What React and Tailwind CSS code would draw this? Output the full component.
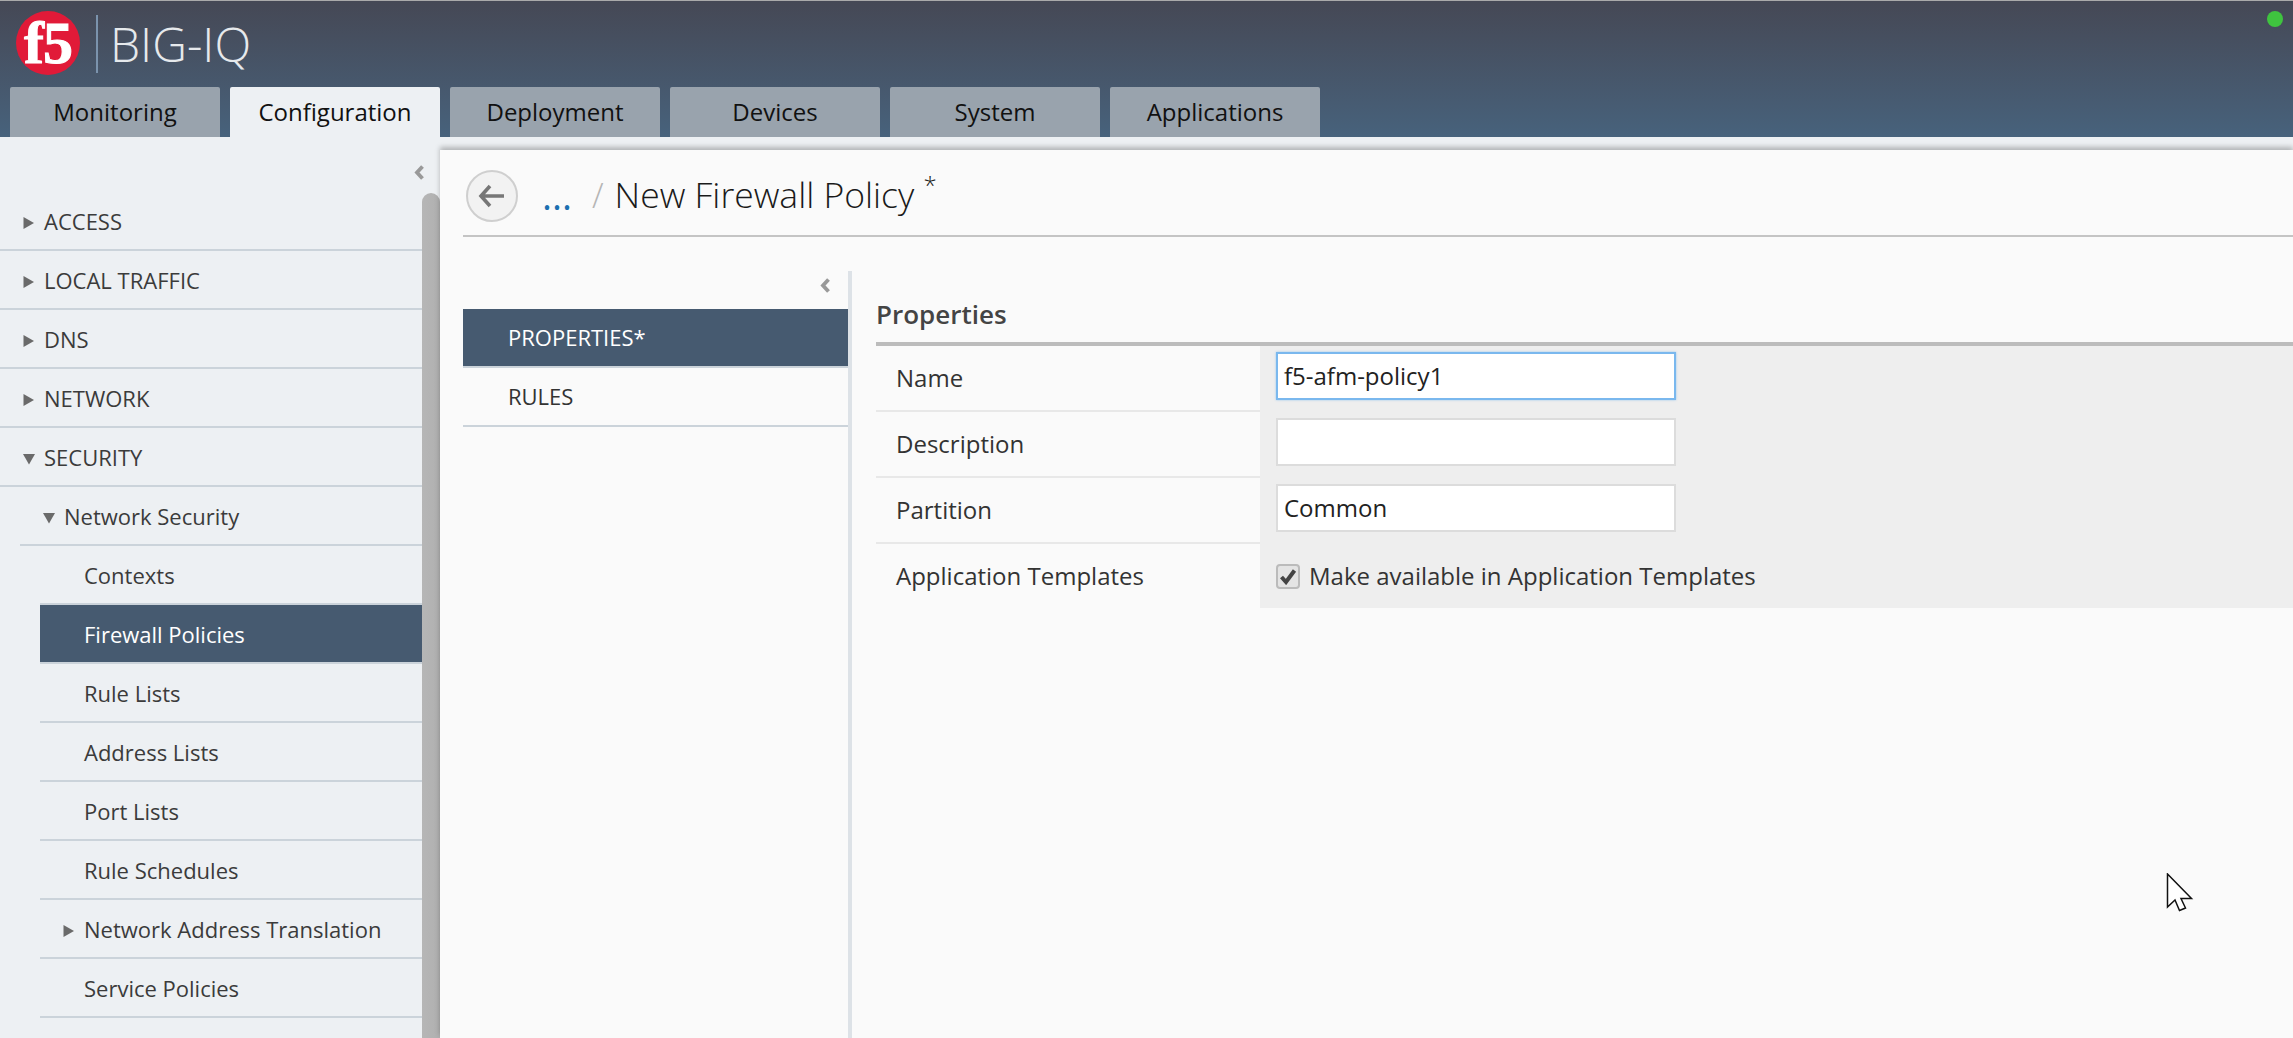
import React from "react";

const font = { fontFamily: '"Open Sans", sans-serif' };

const tabs = ["Monitoring", "Configuration", "Deployment", "Devices", "System", "Applications"];

const navItems = [
  { label: "ACCESS", indent: 0, arrow: "right" },
  { label: "LOCAL TRAFFIC", indent: 0, arrow: "right" },
  { label: "DNS", indent: 0, arrow: "right" },
  { label: "NETWORK", indent: 0, arrow: "right" },
  { label: "SECURITY", indent: 0, arrow: "down" },
  { label: "Network Security", indent: 1, arrow: "down" },
  { label: "Contexts", indent: 2 },
  { label: "Firewall Policies", indent: 2, active: true },
  { label: "Rule Lists", indent: 2 },
  { label: "Address Lists", indent: 2 },
  { label: "Port Lists", indent: 2 },
  { label: "Rule Schedules", indent: 2 },
  { label: "Network Address Translation", indent: 2, arrow: "right" },
  { label: "Service Policies", indent: 2 },
];

const Arrow = ({ dir }) => (
  <svg width="12" height="14" viewBox="0 0 12 14" className="shrink-0">
    {dir === "right" ? (
      <path d="M0.5 1 L11 7 L0.5 13 Z" fill="#6a6a6a" />
    ) : (
      <path d="M0 2 L12 2 L6 12.5 Z" fill="#6a6a6a" />
    )}
  </svg>
);

const Chevron = () => (
  <svg width="11" height="15" viewBox="0 0 11 15">
    <path d="M8.5 1.5 L3 7.5 L8.5 13.5" fill="none" stroke="#999" strokeWidth="3.8" />
  </svg>
);

const NavRow = ({ item }) => {
  const ml = item.indent === 0 ? "ml-0" : item.indent === 1 ? "ml-[20px]" : "ml-[40px]";
  return (
    <div
      className={`relative flex items-center pl-[44px] pt-[2px] border-b-2 border-[#cbd3da] text-[22px] ${ml} ${
        item.active ? "bg-[#465a70] text-white -mt-[2px] h-[61px] border-t-2" : "h-[59px] text-[#3b3b3b]"
      }`}
    >
      {item.arrow && (
        <span className="absolute left-[23px] top-[24px]">
          <Arrow dir={item.arrow} />
        </span>
      )}
      {item.label}
    </div>
  );
};

const FieldRow = ({ label, children, last }) => (
  <div className={`flex ${last ? "h-[64px]" : "h-[66px]"}`}>
    <div
      className={`w-[384px] flex items-center pl-[20px] text-[24px] text-[#333] ${
        last ? "" : "border-b-2 border-[#e8e8e8]"
      }`}
    >
      {label}
    </div>
    <div className={`flex-1 bg-[#eeeeee] flex pl-[16px] ${last ? "items-center" : "pt-[6px]"}`}>{children}</div>
  </div>
);

const TextBox = ({ value, focus }) => (
  <div
    className={`w-[400px] h-[48px] bg-white flex items-center px-[6px] text-[24px] text-[#222] border-2 ${
      focus ? "border-[#7ab8ee] shadow-[0_0_2px_rgba(90,170,240,0.6)]" : "border-[#dcdcdc]"
    }`}
  >
    {value}
  </div>
);

export default function App() {
  return (
    <div className="relative w-[2293px] h-[1038px] overflow-hidden bg-[#edf0f3]" style={font}>
      {/* top bar */}
      <header className="h-[137px] border-t border-[#aaaaaa] bg-gradient-to-b from-[#454855] to-[#47627c] relative flex flex-col">
        <div className="h-[86px] flex items-center pl-[16px]">
          <svg width="64" height="64" viewBox="0 0 64 64" className="shrink-0 -mt-[2px] overflow-visible">
            <ellipse cx="32" cy="32" rx="32" ry="32" fill="#e11a38" />
            <text
              x="32"
              y="52"
              textAnchor="middle"
              fontSize="60"
              fontWeight="700"
              letterSpacing="-1"
              fill="#fff"
              stroke="#fff"
              strokeWidth="1"
              fontFamily='"Liberation Serif", serif'
            >
              f5
            </text>
          </svg>
          <div className="w-[2px] h-[58px] bg-[#7b93ad] ml-[16px]" />
          <span className="ml-[12px] text-[#e6e9ec] text-[48px] font-light whitespace-nowrap">BIG-IQ</span>
        </div>
        <nav className="flex gap-[10px] pl-[10px] h-[50px]">
          {tabs.map((t) => (
            <div
              key={t}
              className={`w-[210px] rounded-t-[2px] flex items-center justify-center text-[24px] text-[#111] ${
                t === "Configuration" ? "bg-[#edf0f3]" : "bg-[#99a3ad]"
              }`}
            >
              {t}
            </div>
          ))}
        </nav>
        <span className="absolute right-[10px] top-[10px] w-[16px] h-[16px] rounded-full bg-[#3fc43f]" />
      </header>

      <div className="flex h-[901px]">
        {/* left nav */}
        <aside className="w-[440px] shrink-0 flex">
          <div className="w-[422px] shrink-0">
            <div className="h-[55px] flex justify-end items-start pt-[28px] -mr-[3px]">
              <Chevron />
            </div>
            {navItems.map((item) => (
              <NavRow key={item.label} item={item} />
            ))}
          </div>
          <div className="w-[18px] mt-[56px] rounded-t-[9px] bg-gradient-to-r from-[#b6b6b6] to-[#b0b0b0]" />
        </aside>

        {/* content */}
        <main className="flex-1 mt-[13px] bg-[#fafafa] shadow-[0_-3px_5px_rgba(0,0,0,0.25)]">
          <div className="ml-[23px] h-[87px] border-b-2 border-[#c4c4c4] flex items-center">
            <div className="ml-[3px] mt-[6px] w-[52px] h-[52px] rounded-full border-2 border-[#cfcfcf] bg-[#f2f2f2] flex items-center justify-center shrink-0">
              <svg width="30" height="26" viewBox="0 0 30 26">
                <path d="M13 3 L4 13 L13 23 M5 13 L27 13" fill="none" stroke="#777" strokeWidth="3.6" />
              </svg>
            </div>
            <span className="ml-[24px] mt-[5px] text-[#1c6fb0] text-[38px] font-normal">...</span>
            <span className="ml-[20px] mt-[5px] text-[#b5b5b5] text-[34px] font-light">/</span>
            <span className="ml-[11px] mt-[5px] text-[#1a1a1a] text-[35.5px] font-light whitespace-nowrap">
              New Firewall Policy <sup className="text-[24px] -top-[14px]">*</sup>
            </span>
          </div>

          <div className="flex pt-[34px]">
            <div className="ml-[23px] w-[385px] shrink-0">
              <div className="h-[38px] flex justify-end items-start pr-[17px] pt-[7px]">
                <Chevron />
              </div>
              <div className="h-[59px] bg-[#465a70] text-white text-[22px] flex items-center pl-[45px] border-b-2 border-[#cbd3da]">
                PROPERTIES*
              </div>
              <div className="h-[59px] text-[#333] text-[22px] flex items-center pl-[45px] border-b-2 border-[#cbd3da]">
                RULES
              </div>
            </div>
            <div className="w-[4px] h-[767px] bg-[#dde2e7] shrink-0" />
            <section className="flex-1 pl-[24px]">
              <h2 className="h-[71px] pt-[14px] flex items-center text-[26px] font-semibold text-[#444] leading-none">
                Properties
              </h2>
              <div className="border-t-4 border-[#bcbcbc]">
                <FieldRow label="Name">
                  <TextBox value="f5-afm-policy1" focus />
                </FieldRow>
                <FieldRow label="Description">
                  <TextBox value="" />
                </FieldRow>
                <FieldRow label="Partition">
                  <TextBox value="Common" />
                </FieldRow>
                <FieldRow label="Application Templates" last>
                  <div className="w-[24px] h-[25px] rounded-[4px] border-2 border-[#bbb] bg-[#e4e4e4] flex items-center justify-center">
                    <svg width="18" height="17" viewBox="0 0 18 17">
                      <path d="M2.5 9 L7 14 L15.5 2.5" fill="none" stroke="#444" strokeWidth="4" />
                    </svg>
                  </div>
                  <span className="ml-[9px] text-[24px] text-[#333]">Make available in Application Templates</span>
                </FieldRow>
              </div>
            </section>
          </div>
        </main>
      </div>

      {/* mouse cursor in the capture */}
      <svg className="absolute left-[2166px] top-[873px]" width="28" height="40" viewBox="0 0 28 40">
        <path
          d="M1.5 1 L1.5 34 L9 27 L13.5 37.5 L19.5 35 L15 25.5 L25.5 25.5 Z"
          fill="#fff"
          stroke="#111"
          strokeWidth="1.5"
        />
      </svg>
    </div>
  );
}
